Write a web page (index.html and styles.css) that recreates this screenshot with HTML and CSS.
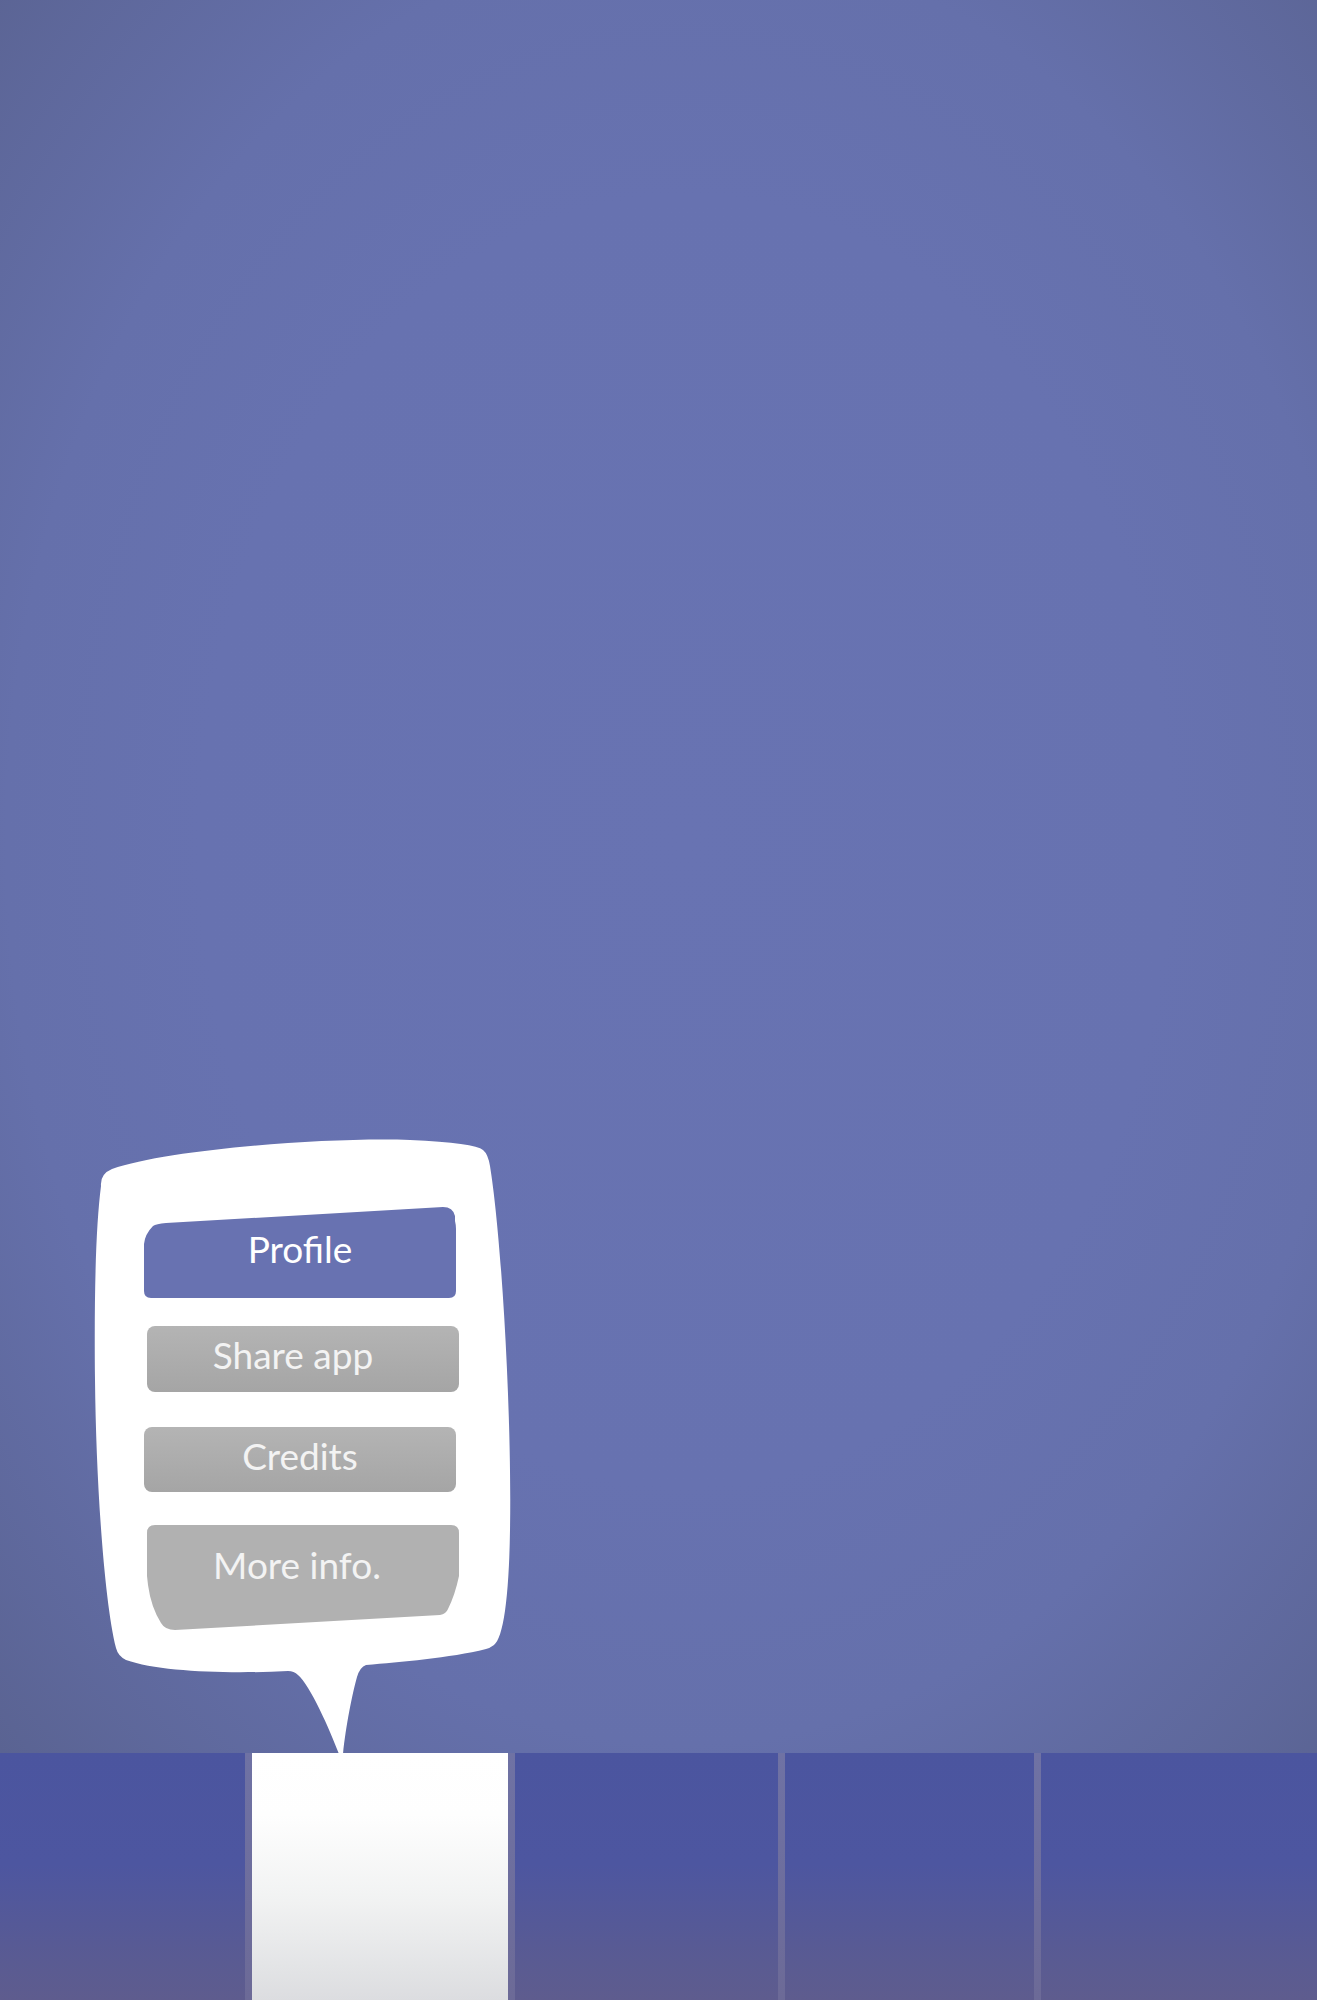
FILE: index.html
```html
<!DOCTYPE html>
<html lang="en">
<head>
<meta charset="utf-8">
<title>Menu</title>
<link rel="stylesheet" href="styles.css">
</head>
<body>
<div class="screen">
  <main class="stage">
    <div class="popup">
      <svg class="bubble" viewBox="90 1130 430 624" width="430" height="624" aria-hidden="true">
        <path fill="#ffffff" d="M101,1186 Q100,1174 112,1169 C170,1149 330,1137 410,1140 Q475,1143 483,1150 Q488,1154 490,1166 C502,1240 512,1420 510,1530 C509,1600 503,1638 494,1645 Q490,1648 486,1649 C450,1658 400,1662 366,1665 Q360,1667 357,1677 C352,1695 346,1725 343,1754 L339,1754 C330,1730 310,1685 298,1675 Q294,1671 288,1671 C230,1674 160,1672 126,1660 Q118,1656 116,1648 C104,1600 96,1480 95,1380 C94,1290 96,1225 101,1186 Z"/>
      </svg>
      <nav class="menu">
        <a class="btn btn-profile">
          <svg class="btn-shape" viewBox="0 0 312 91" preserveAspectRatio="none" aria-hidden="true">
            <path fill="#6872b1" d="M0,84 L0,37 Q1,27 9,19 Q12,17 22,16 L299,0 Q309,0 311,9 L311,14 Q312,18 312,22 L312,84 Q312,91 305,91 L7,91 Q0,91 0,84 Z"/>
          </svg>
          <span class="label">Profile</span>
        </a>
        <a class="btn btn-grey btn-share"><span class="label">Share app</span></a>
        <a class="btn btn-grey btn-credits"><span class="label">Credits</span></a>
        <a class="btn btn-more">
          <svg class="btn-shape" viewBox="0 0 312 105" preserveAspectRatio="none" aria-hidden="true">
            <path fill="#b1b1b1" d="M8,0 L304,0 Q312,0 312,8 L312,51 Q308,70 301,84 Q299,89 293,90 L28,105 Q18,105 14,98 Q4,82 1,60 L0,51 L0,8 Q0,0 8,0 Z"/>
          </svg>
          <span class="label">More info.</span>
        </a>
      </nav>
    </div>
  </main>
  <footer class="tabbar">
    <div class="tab"></div>
    <div class="tab tab-active"></div>
    <div class="tab"></div>
    <div class="tab"></div>
    <div class="tab"></div>
  </footer>
</div>
</body>
</html>
```
FILE: styles.css
```css
html, body {
  margin: 0;
  padding: 0;
}
body {
  font-family: Lato, "Open Sans", "Liberation Sans", sans-serif;
  background: #6772b0;
}
.screen {
  width: 1317px;
  height: 2000px;
  display: flex;
  flex-direction: column;
  overflow: hidden;
}
.stage {
  position: relative;
  flex: 0 0 1753px;
  background: radial-gradient(ellipse farthest-corner at 52% 48%, #6873b2 0%, #6772b0 50%, #6570ab 70%, #5a6392 100%);
}
.popup {
  position: absolute;
  left: 90px;
  top: 1130px;
  width: 430px;
  height: 623px;
}
.bubble {
  position: absolute;
  left: 0;
  top: 0;
  display: block;
}
.menu {
  position: absolute;
  left: 54px;
  top: 77px;
  width: 315px;
  display: flex;
  flex-direction: column;
}
.btn {
  position: relative;
  display: flex;
  align-items: center;
  justify-content: center;
  width: 312px;
  color: #f3f3f3;
  font-size: 37px;
  line-height: 1;
  text-decoration: none;
}
.btn-shape {
  position: absolute;
  left: 0;
  top: 0;
  width: 100%;
  height: 100%;
  display: block;
}
.label {
  position: relative;
}
.btn-profile {
  height: 91px;
  color: #ffffff;
  padding-bottom: 8px;
  box-sizing: border-box;
}
.btn-grey {
  height: 66px;
  border-radius: 8px;
  background: linear-gradient(#b4b4b4, #a5a5a5);
  box-sizing: border-box;
  padding-bottom: 10px;
}
.btn-share {
  margin-top: 28px;
  margin-left: 3px;
}
.btn-share .label {
  left: -10px;
}
.btn-credits {
  margin-top: 35px;
  height: 65px;
  padding-bottom: 8px;
}
.btn-more {
  margin-top: 33px;
  margin-left: 3px;
  height: 105px;
  align-items: flex-start;
  padding-top: 21px;
  box-sizing: border-box;
}
.btn-more .label {
  left: -6px;
}
.tabbar {
  flex: 0 0 247px;
  display: grid;
  grid-template-columns: 245px 256px 263px 249px 1fr;
  column-gap: 7px;
  background: linear-gradient(#6f72a4, #6c6a97);
}
.tab {
  background: linear-gradient(#4b559f 0%, #4d56a0 45%, #5a5b92 85%, #5e5c8e 100%);
}
.tab-active {
  background: linear-gradient(#ffffff 0%, #fefefe 25%, #f1f2f2 60%, #dcdde0 100%);
}
```
